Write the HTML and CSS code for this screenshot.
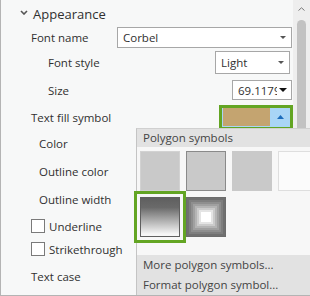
FILE: index.html
```html
<!DOCTYPE html>
<html lang="en">
  <head>
    <meta charset="UTF-8" />
    <title>Appearance</title>
    <link rel="stylesheet" href="styles.css">
  </head>
  <body>
    <div class="pane">
      <div class="content">
        <div class="section-head">
          <svg class="chevron" width="8" height="5" viewBox="0 0 8 5"><path d="M1 1 L4 4 L7 1" fill="none" stroke="#555" stroke-width="1.6"/></svg>
          <span>Appearance</span>
        </div>

        <div class="row row-name">
          <span class="label">Font name</span>
          <div class="combo combo-name">
            <span class="value">Corbel</span>
            <svg class="caret" width="6" height="3" viewBox="0 0 6 3"><path d="M0 0 H6 L3 3 Z" fill="#555"/></svg>
          </div>
        </div>

        <div class="row row-style indent">
          <span class="label">Font style</span>
          <div class="combo combo-style">
            <span class="value">Light</span>
            <svg class="caret" width="6" height="3" viewBox="0 0 6 3"><path d="M0 0 H6 L3 3 Z" fill="#555"/></svg>
          </div>
        </div>

        <div class="row row-size indent">
          <span class="label">Size</span>
          <div class="combo combo-size">
            <span class="value num">69.1179</span>
            <svg class="caret" width="8" height="4" viewBox="0 0 8 4"><path d="M0 0 H8 L4 4 Z" fill="#111"/></svg>
          </div>
        </div>

        <div class="row row-fill">
          <span class="label">Text fill symbol</span>
          <div class="symbol-btn">
            <span class="symbol-swatch"></span>
            <span class="symbol-drop">
              <svg width="7" height="4" viewBox="0 0 7 4"><path d="M0 4 H7 L3.5 0 Z" fill="#1c6cbc"/></svg>
            </span>
          </div>
        </div>

        <div class="row row-color sub"><span class="label">Color</span></div>
        <div class="row row-ocolor sub"><span class="label">Outline color</span></div>
        <div class="row row-owidth sub"><span class="label">Outline width</span></div>

        <div class="row row-under">
          <span class="check"></span>
          <span class="label">Underline</span>
        </div>
        <div class="row row-strike">
          <span class="check"></span>
          <span class="label">Strikethrough</span>
        </div>

        <div class="row row-case"><span class="label">Text case</span></div>
      </div>

      <div class="scrollbar">
        <svg class="scroll-up" width="7" height="4" viewBox="0 0 7 4"><path d="M0.5 3.5 L3.5 0.8 L6.5 3.5" fill="none" stroke="#777" stroke-width="1"/></svg>
        <div class="thumb"></div>
      </div>

      <!-- symbol gallery dropped down from the fill button -->
      <div class="gallery">
        <div class="gallery-head">Polygon symbols</div>
        <div class="gallery-grid">
          <span class="sym sym-grey"></span>
          <span class="sym sym-grey sym-dark-edge"></span>
          <span class="sym sym-grey sym-flat"></span>
          <span class="sym sym-white"></span>
          <span class="sym sym-fade selected"></span>
          <span class="sym sym-box"></span>
        </div>
        <div class="gallery-foot">
          <div class="gallery-item">More polygon symbols...</div>
          <div class="gallery-item">Format polygon symbol...</div>
        </div>
      </div>
    </div>
  </body>
</html>
```

FILE: styles.css
```css
body {
  margin: 0;
  font-family: "Open Sans", "Noto Sans", sans-serif;
  font-size: 11.5px;
  color: #303030;
  background-color: #f7f8f8;
  overflow: hidden;
}

.pane {
  position: relative;
  width: 309px;
  height: 295px;
  display: flex;
  border-left: 1px solid #b4b4b4;
  border-bottom: 1px solid #b4b4b4;
  background-color: #f7f8f8;
}

.content {
  flex: 1;
  display: flex;
  flex-direction: column;
  padding-left: 30px;
}

.section-head {
  height: 26px;
  display: flex;
  align-items: center;
  margin-left: -11px;
  padding-top: 1px;
  box-sizing: border-box;
  font-size: 13px;
  color: #303030;
}

.chevron {
  margin-right: 5px;
  margin-top: -2px;
}

.row {
  display: flex;
  align-items: center;
}

.indent {
  padding-left: 17px;
}

.sub {
  padding-left: 8px;
}

.row-name { height: 22px; }
.row-style { height: 28px; }
.row-size { height: 28px; }
.row-fill { height: 26px; }
.row-color { height: 26px; }
.row-ocolor { height: 30px; }
.row-owidth { height: 26px; }
.row-under { height: 28px; }
.row-strike { height: 18px; }
.row-case { height: 37px; }

.label {
  white-space: nowrap;
}

.combo {
  margin-left: auto;
  display: flex;
  align-items: center;
  box-sizing: border-box;
  border: 1px solid #a7a7a7;
  background-color: #fff;
  padding-left: 5px;
  padding-right: 5px;
}

.combo .value {
  flex: 1;
  overflow: hidden;
  white-space: nowrap;
}

.combo-name {
  width: 175px;
  height: 21px;
  margin-right: 1px;
}

.combo-style {
  width: 75px;
  height: 23px;
  margin-right: 3px;
}

.combo-size {
  width: 60px;
  height: 20px;
  margin-right: 1px;
  padding-right: 4px;
}

.combo-size .num {
  margin-right: 2px;
}

.symbol-btn {
  margin-left: auto;
  width: 74px;
  height: 25px;
  box-sizing: border-box;
  border: 3px solid #63a523;
  display: flex;
  background-color: #a9d5f6;
  padding: 0 0 1px 1px;
}

.symbol-swatch {
  width: 47px;
  background-color: #c4a470;
}

.symbol-drop {
  flex: 1;
  display: flex;
  align-items: center;
  justify-content: center;
  padding-top: 1px;
}

.check {
  width: 14px;
  height: 14px;
  box-sizing: border-box;
  border: 1px solid #7a7a7a;
  background-color: #fff;
  margin-right: 4px;
}

.scrollbar {
  width: 17px;
  background-color: #eeeeee;
  display: flex;
  flex-direction: column;
  align-items: center;
}

.scroll-up {
  margin-top: 7px;
}

.thumb {
  margin-top: 9px;
  width: 9px;
  flex: 1;
  border-radius: 5px;
  background-color: #c2c2c2;
}

.gallery {
  position: absolute;
  left: 135px;
  top: 128px;
  right: 0;
  bottom: 0;
  display: flex;
  flex-direction: column;
  border-left: 1px solid #c4c4c4;
  border-top: 1px solid #d0d0d0;
  background-color: #f7f7f7;
}

.gallery-head {
  height: 18px;
  line-height: 18px;
  padding-left: 6px;
  background-color: #e2e2e2;
  color: #444;
}

.gallery-grid {
  display: grid;
  grid-template-columns: repeat(4, 40px);
  grid-auto-rows: 40px;
  gap: 6px;
  padding: 4px 0 0 3px;
}

.sym {
  box-sizing: border-box;
  border: 1px solid #d2d2d2;
}

.sym-grey {
  background-color: #c9c9c9;
}

.sym-dark-edge {
  border-color: #8a8a8a;
}

.sym-flat {
  border-color: #c9c9c9;
}

.sym-white {
  background-color: #fbfbfb;
  border-color: #dedede;
}

.sym-fade {
  border-color: #5f5f5f;
  background: linear-gradient(#5f5f5f, #6a6a6a 25%, #f6f6f6 95%);
}

.sym-fade.selected {
  outline: 3px solid #63a523;
  outline-offset: 3px;
}

.sym-box {
  border-color: #6c6c6c;
  background-color: #ffffff;
  box-shadow:
    inset 0 0 0 2px #707070,
    inset 0 0 0 4px #7e7e7e,
    inset 0 0 0 6px #8e8e8e,
    inset 0 0 0 8px #a0a0a0,
    inset 0 0 0 10px #b4b4b4,
    inset 0 0 0 12px #cbcbcb,
    inset 0 0 0 14px #e4e4e4;
}

.gallery-foot {
  margin-top: auto;
  background-color: #e2e2e2;
  color: #444;
}

.gallery-item {
  height: 20px;
  line-height: 20px;
  padding-left: 6px;
  white-space: nowrap;
}
```
